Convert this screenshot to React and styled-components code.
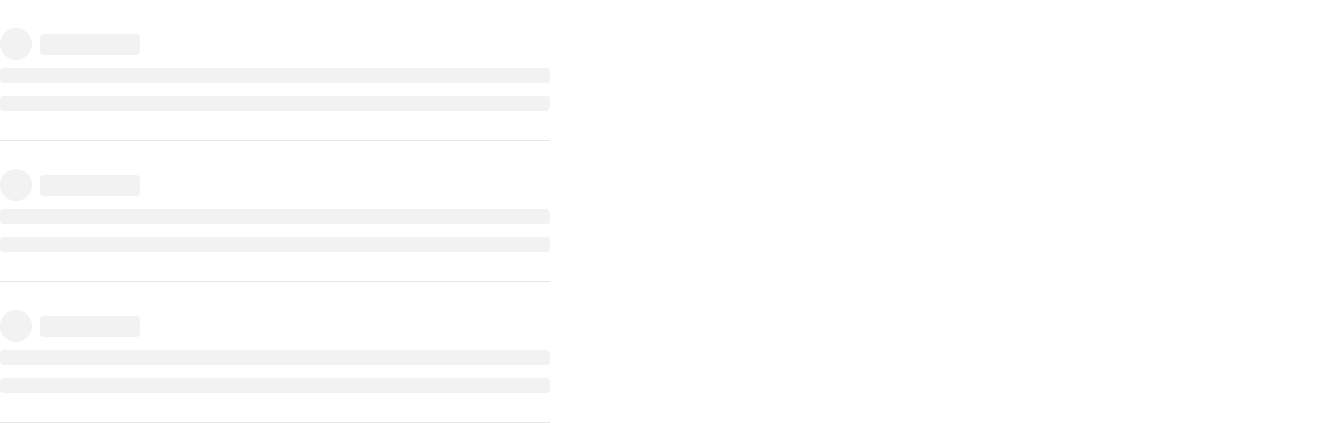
import React from "react";
import styled, { createGlobalStyle } from "styled-components";

const GlobalStyle = createGlobalStyle`
  body {
    margin: 0;
    background: #fff;
    font-family: "Liberation Sans", Arial, sans-serif;
  }
`;

const List = styled.div`
  width: 550px;
`;

const Item = styled.div`
  padding: 28px 0 29px;
  border-bottom: 1px solid #e6e6e6;
`;

const Header = styled.div`
  display: flex;
  align-items: center;
  gap: 8px;
  margin-bottom: 8px;
`;

const Avatar = styled.div`
  width: 32px;
  height: 32px;
  border-radius: 50%;
  background: #f2f2f2;
`;

const Title = styled.div`
  width: 100px;
  height: 21px;
  border-radius: 4px;
  background: #f2f2f2;
`;

const Line = styled.div`
  height: 15px;
  border-radius: 4px;
  background: #f2f2f2;
  & + & {
    margin-top: 13px;
  }
`;

const SkeletonItem = () => (
  <Item>
    <Header>
      <Avatar />
      <Title />
    </Header>
    <Line />
    <Line />
  </Item>
);

const App = () => (
  <>
    <GlobalStyle />
    <List>
      {[0, 1, 2].map((i) => (
        <SkeletonItem key={i} />
      ))}
    </List>
  </>
);

export default App;
